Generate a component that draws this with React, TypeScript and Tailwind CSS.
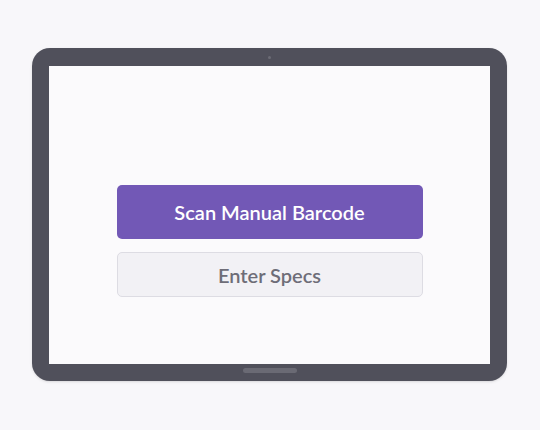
import React from 'react';

const App: React.FC = () => {
  return (
    <div
      className="w-[540px] h-[430px] bg-[#f8f7fa] pt-[48px] pl-[32px]"
      style={{ fontFamily: 'Lato, "Noto Sans", sans-serif' }}
    >
      {/* Tablet frame */}
      <div className="w-[475px] h-[333px] bg-[#50505b] rounded-[18px] flex flex-col px-[17px] shadow-sm">
        <div className="h-[18px] flex items-center justify-center">
          <div className="w-[3px] h-[3px] rounded-full bg-[#6c6c76]" />
        </div>

        {/* Screen */}
        <div className="flex-1 bg-[#fbfafc] flex flex-col items-center pt-[119px]">
          <button className="w-[306px] h-[54px] rounded-[5px] bg-[#7258b6] text-white text-[20px] font-semibold">
            Scan Manual Barcode
          </button>
          <button className="w-[306px] h-[45px] mt-[13px] rounded-[5px] bg-[#f2f1f5] border border-[#dddce3] text-[#6e6d78] text-[20px] font-semibold">
            Enter Specs
          </button>
        </div>

        <div className="h-[17px] flex justify-center pt-[4px]">
          <div className="w-[54px] h-[5px] rounded-full bg-[#6a6a74]" />
        </div>
      </div>
    </div>
  );
};

export default App;
